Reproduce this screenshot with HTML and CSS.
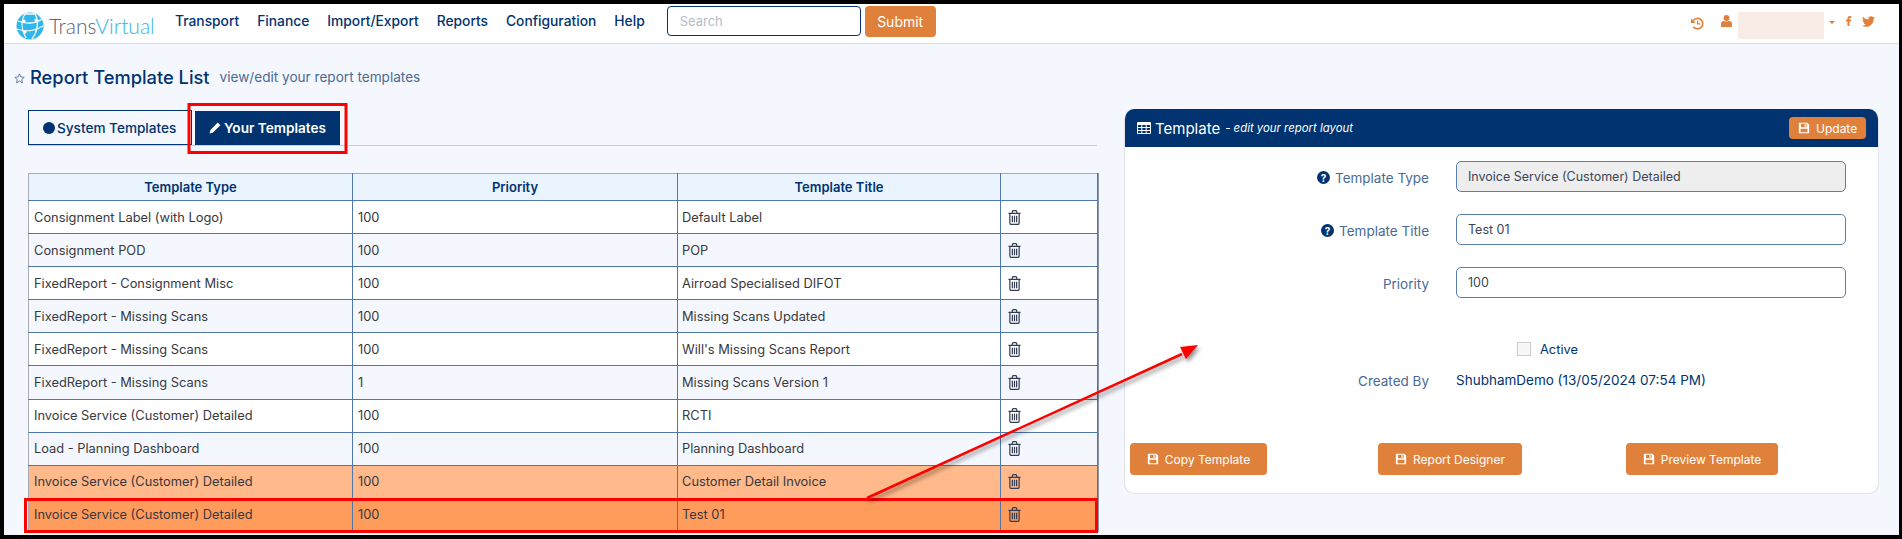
FILE: index.html
```html
<!DOCTYPE html>
<html lang="en">
<head>
<meta charset="utf-8">
<title>Report Template List</title>
<link rel="stylesheet" href="styles.css">
</head>
<body>
<svg class="defs" aria-hidden="true">
  <symbol id="i-save" viewBox="0 0 14 14"><path fill-rule="evenodd" d="M1.500 1h9.500l2 2v9.500a.5.5 0 0 1-.5.5h-11a.5.5 0 0 1-.5-.5v-11a.5.5 0 0 1 .5-.5zM3.500 2v4h6.500V2zM3 8v4h8V8zM7.600 2.600h1.400v2.800H7.600z"/></symbol>
  <symbol id="i-trash" viewBox="0 0 14 16"><path fill="none" stroke="currentColor" stroke-width="1.300" d="M.5 3.500h13M2 3.500v10.200c0 1 .6 1.800 1.400 1.800h7.200c.8 0 1.400-.8 1.400-1.800V3.500M4.600 3.500V2c0-.8.5-1.400 1.200-1.400h2.400c.7 0 1.200.6 1.200 1.400v1.500M4.700 6v7M7 6v7M9.300 6v7"/></symbol>
</svg>
<div class="frame">
  <header class="topbar">
    <a class="logo">
      <svg class="globe" viewBox="0 0 28 28"><circle cx="14" cy="14" r="13.500" fill="#2fb6ea"/><path fill="none" stroke="#fff" stroke-width="1.300" d="M9 2c-4 6-4 15 1 24M2 9c7 3 17 3 24-2M1 17c8 3 18 2 26-3M19 2c4 7 3 17-3 25M9 2c4 0 8 0 10 0"/><circle cx="8" cy="9" r="1.600" fill="#fff"/><circle cx="20" cy="8" r="1.600" fill="#fff"/><circle cx="9" cy="20" r="1.600" fill="#fff"/></svg>
      <span class="logo-text">Trans<span class="logo-accent">Virtual</span></span>
    </a>
    <nav class="nav">
      <a>Transport</a><a>Finance</a><a>Import/Export</a><a>Reports</a><a>Configuration</a><a>Help</a>
    </nav>
    <form class="search">
      <input class="search-input" type="text" placeholder="Search">
      <button class="btn btn-submit" type="button">Submit</button>
    </form>
    <div class="top-right">
      <svg class="ti ti-history" viewBox="0 0 14 14"><path fill="none" stroke="currentColor" stroke-width="1.800" d="M2.400 4A5.600 5.600 0 1 1 2.600 10.500"/><path d="M0 1.500v5h5z" fill="currentColor"/><path fill="none" stroke="currentColor" stroke-width="1.400" d="M7 3.800v3.600h3"/></svg>
      <svg class="ti ti-user" viewBox="0 0 12 13"><circle cx="6" cy="3.200" r="3.200" fill="currentColor"/><path fill="currentColor" d="M0 13V9.500C0 7.600 1.400 6.400 3 6.400c1 .7 5 .7 6 0 1.600 0 3 1.200 3 3.100V13z"/></svg>
      <span class="blurred"></span>
      <span class="caret"></span>
      <svg class="ti ti-fb" viewBox="5 3 14 22"><path fill="currentColor" d="M14.500 8h3V4h-3c-2.800 0-4.500 1.900-4.500 4.700V11H7v4h3v9h4v-9h3l.5-4H14V8.900c0-.6.200-.9.500-.9z"/></svg>
      <svg class="ti ti-tw" viewBox="0 0 24 24"><path fill="currentColor" d="M23.953 4.570a10 10 0 01-2.825.775 4.958 4.958 0 002.163-2.723c-.951.555-2.005.959-3.127 1.184a4.920 4.920 0 00-8.384 4.482C7.690 8.095 4.067 6.130 1.640 3.162a4.822 4.822 0 00-.666 2.475c0 1.710.870 3.213 2.188 4.096a4.904 4.904 0 01-2.228-.616v.060a4.923 4.923 0 003.946 4.827 4.996 4.996 0 01-2.212.085 4.936 4.936 0 004.604 3.417 9.867 9.867 0 01-6.102 2.105c-.390 0-.779-.023-1.170-.067a13.995 13.995 0 007.557 2.209c9.053 0 13.998-7.496 13.998-13.985 0-.210 0-.420-.015-.630A9.935 9.935 0 0024 4.590z"/></svg>
    </div>
  </header>

  <main class="content">
    <div class="page-title">
      <svg class="star" viewBox="0 0 12 12"><path fill="none" stroke="#4a6a94" stroke-width=".9" d="M6 1l1.500 3.300 3.600.4-2.700 2.400.8 3.600L6 8.900l-3.200 1.800.8-3.600L.9 4.700l3.600-.4z"/></svg>
      <h1>Report Template List</h1>
      <span class="page-sub">view/edit your report templates</span>
    </div>

    <div class="columns">
      <section class="left">
        <div class="tabs">
          <a class="tab">
            <span class="dot"></span>System Templates
          </a>
          <a class="tab tab-active">
            <svg class="tab-ico" viewBox="0 0 12 12"><path fill="#fff" d="M8.800.6l2.600 2.600-7.400 7.400-3.400.8.800-3.400z"/></svg>Your Templates
          </a>
        </div>
        <table class="grid">
          <colgroup><col class="c1"><col class="c2"><col class="c3"><col class="c4"></colgroup>
          <thead>
            <tr><th>Template Type</th><th>Priority</th><th>Template Title</th><th></th></tr>
          </thead>
          <tbody>
            <tr><td>Consignment Label (with Logo)</td><td>100</td><td>Default Label</td><td><svg class="trash"><use href="#i-trash"/></svg></td></tr>
            <tr><td>Consignment POD</td><td>100</td><td>POP</td><td><svg class="trash"><use href="#i-trash"/></svg></td></tr>
            <tr><td>FixedReport - Consignment Misc</td><td>100</td><td>Airroad Specialised DIFOT</td><td><svg class="trash"><use href="#i-trash"/></svg></td></tr>
            <tr><td>FixedReport - Missing Scans</td><td>100</td><td>Missing Scans Updated</td><td><svg class="trash"><use href="#i-trash"/></svg></td></tr>
            <tr><td>FixedReport - Missing Scans</td><td>100</td><td>Will's Missing Scans Report</td><td><svg class="trash"><use href="#i-trash"/></svg></td></tr>
            <tr><td>FixedReport - Missing Scans</td><td>1</td><td>Missing Scans Version 1</td><td><svg class="trash"><use href="#i-trash"/></svg></td></tr>
            <tr><td>Invoice Service (Customer) Detailed</td><td>100</td><td>RCTI</td><td><svg class="trash"><use href="#i-trash"/></svg></td></tr>
            <tr><td>Load - Planning Dashboard</td><td>100</td><td>Planning Dashboard</td><td><svg class="trash"><use href="#i-trash"/></svg></td></tr>
            <tr class="hl"><td>Invoice Service (Customer) Detailed</td><td>100</td><td>Customer Detail Invoice</td><td><svg class="trash"><use href="#i-trash"/></svg></td></tr>
            <tr class="sel"><td>Invoice Service (Customer) Detailed</td><td>100</td><td>Test 01</td><td><svg class="trash"><use href="#i-trash"/></svg></td></tr>
          </tbody>
        </table>
      </section>

      <section class="panel">
        <div class="panel-head">
          <div class="panel-title">
            <svg class="tbl-ico" viewBox="0 0 14 12"><path fill="#fff" fill-rule="evenodd" d="M1 0h12a1 1 0 0 1 1 1v10a1 1 0 0 1-1 1H1a1 1 0 0 1-1-1V1a1 1 0 0 1 1-1zM1 3v2h3.300V3zM5.300 3v2h3.400V3zM9.700 3v2H13V3zM1 6v2h3.300V6zM5.300 6v2h3.400V6zM9.700 6v2H13V6zM1 9v2h3.300V9zM5.300 9v2h3.400V9zM9.700 9v2H13V9z"/></svg>
            <span>Template</span><em>- edit your report layout</em>
          </div>
          <button class="btn btn-update" type="button"><svg class="save"><use href="#i-save"/></svg>Update</button>
        </div>
        <div class="panel-body">
          <div class="form-row">
            <label class="form-label"><span class="help">?</span>Template Type</label>
            <input class="form-input" type="text" value="Invoice Service (Customer) Detailed" disabled>
          </div>
          <div class="form-row">
            <label class="form-label"><span class="help">?</span>Template Title</label>
            <input class="form-input" type="text" value="Test 01">
          </div>
          <div class="form-row">
            <label class="form-label">Priority</label>
            <input class="form-input" type="text" value="100">
          </div>
          <div class="active-row"><span class="check"></span>Active</div>
          <div class="created-row">
            <span class="form-label">Created By</span>
            <span class="created-value">ShubhamDemo (13/05/2024 07:54 PM)</span>
          </div>
          <div class="actions">
            <button class="btn btn-action" type="button"><svg class="save"><use href="#i-save"/></svg>Copy Template</button>
            <button class="btn btn-action" type="button"><svg class="save"><use href="#i-save"/></svg>Report Designer</button>
            <button class="btn btn-action" type="button"><svg class="save"><use href="#i-save"/></svg>Preview Template</button>
          </div>
        </div>
      </section>
    </div>
  </main>

  <svg class="marks" viewBox="0 0 1902 539" aria-hidden="true">
    <defs><filter id="sh" x="-10%" y="-10%" width="120%" height="120%"><feDropShadow dx="2" dy="3" stdDeviation="2" flood-color="#000" flood-opacity=".45"/></filter></defs>
    <rect class="mark-box" x="189" y="104.500" width="157" height="48"/>
    <rect class="mark-box" x="25.500" y="499.500" width="1071" height="32"/>
    <g filter="url(#sh)">
      <path class="mark-line" d="M867 498L1182 354"/>
      <path class="mark-head" d="M1198 345L1180 347L1186 359z"/>
    </g>
  </svg>
</div>
</body>
</html>
```

FILE: styles.css
```css
* { box-sizing: border-box; }
html, body { margin: 0; padding: 0; height: 100%; overflow: hidden; }
body { font-family: "Inter", "Liberation Sans", sans-serif; font-size: 12.850px; color: #333; background: #f4f8fe; }
.defs { position: absolute; width: 0; height: 0; }

.frame { position: relative; width: 1902px; height: 539px; border: solid #000; border-width: 4px 3px 4px 4px; background: #f4f8fe; overflow: hidden; }

.topbar { display: flex; align-items: flex-start; height: 40px; background: #fff; border-bottom: 1px solid #d9dde5; padding-left: 12px; }
.logo { display: flex; align-items: center; width: 159px; height: 39px; }
.globe { width: 28px; height: 28px; margin-right: 5px; flex: none; margin-top: 4px; }
.logo-text { font-family: "Lato", sans-serif; font-weight: 300; font-size: 21px; color: #5b6670; margin-top: 3px; }
.logo-accent { color: #2fb6ea; }
.nav { display: flex; gap: 18px; height: 39px; align-items: center; font-size: 13.800px; font-weight: 500; color: #00336f; margin-top: -3px; }
.search { display: flex; gap: 4px; margin-left: 22px; margin-top: 2px; }
.search-input { width: 194px; height: 30px; border: 1px solid #00336f; border-radius: 4px; padding: 0 12px; font: 13px "Inter", sans-serif; background: #fff; }
.search-input::placeholder { color: #b5bccb; }
.btn { display: inline-flex; align-items: center; border: 0; border-radius: 4px; background: #e0813b; color: #fff; font: 13px "Inter", sans-serif; }
.btn-submit { width: 71px; height: 31px; justify-content: center; font-size: 14px; }

.top-right { display: flex; align-items: flex-start; margin-left: auto; color: #e0813b; padding-right: 24px; height: 39px; }
.ti { display: block; flex: none; }
.ti-history { width: 13px; height: 13px; margin-top: 13px; }
.ti-user { width: 11px; height: 12px; margin: 11px 6px 0 17px; }
.blurred { width: 86px; height: 27px; margin-top: 8px; background: #f9ece7; }
.caret { width: 0; height: 0; border: solid transparent; border-width: 3px 3px 0; border-top-color: #e0813b; margin: 17px 10px 0 5px; }
.ti-fb { width: 7px; height: 12px; margin-top: 11px; }
.ti-tw { width: 13px; height: 13px; margin: 11px 0 0 10px; }

.content { padding-left: 10px; }
.page-title { display: flex; align-items: center; height: 24px; margin-top: 21px; }
.star { width: 11px; height: 11px; margin: 2px 5px 0 0; }
.page-title h1 { margin: 0; font-size: 18.300px; line-height: 24px; font-weight: 500; color: #00336f; }
.page-sub { margin-left: 10px; font-size: 13.600px; color: #4a6a94; }

.columns { display: flex; align-items: flex-start; margin-top: 21px; }
.left { width: 1069px; margin-left: 14px; }
.tabs { display: flex; height: 36px; border-bottom: 1px solid #c7d0df; gap: 3px; }
.tab { display: flex; align-items: center; height: 35px; font-size: 13.600px; font-weight: 500; color: #00336f; }
.tab:first-child { width: 164px; padding-left: 14px; border: 1px solid #00336f; }
.tab-active { width: 145px; margin-top: 1px; height: 34px; padding-left: 14px; background: #00336f; color: #fff; font-weight: 600; }
.dot { width: 12px; height: 12px; border-radius: 50%; background: #00336f; margin-right: 2px; }
.tab-ico { width: 12px; height: 12px; margin-right: 3px; }

.grid { border-collapse: collapse; table-layout: fixed; width: 1069px; margin-top: 27px; box-shadow: 1px 0 0 #8a97ab; }
.c1 { width: 324px; } .c2 { width: 325px; } .c3 { width: 323px; } .c4 { width: 97px; }
.grid th, .grid td { border: 1px solid #4f77a8; padding: 0 5px; }
.grid td:nth-child(3) { padding-left: 4px; }
.grid th { height: 27px; background: #eaf4ff; color: #00336f; font-size: 13px; font-weight: 600; text-align: center; border-top-color: #a9acb2; }
.grid th:first-child, .grid td:first-child { border-left-color: #a9acb2; }
.grid td { height: 33.100px; background: #fff; color: #38383d; }
.grid tbody tr:nth-child(even) td { background: #f4f8fe; }
.grid tbody tr.hl td { background: #ffb98a; }
.grid tbody tr.sel td { background: #ff9c5c; }
.trash { display: block; width: 13px; height: 15px; margin-left: 2px; color: #333c50; }

.panel { width: 755px; margin: -1px 0 0 27px; background: #fff; border: 1px solid #dfe3ea; border-top: 0; border-radius: 10px; overflow: hidden; }
.panel-head { display: flex; align-items: center; justify-content: space-between; height: 38px; padding: 0 12px 0 12px; background: #00336f; color: #fff; }
.panel-title { display: flex; align-items: center; font-size: 15px; }
.tbl-ico { width: 14px; height: 12px; margin-right: 4px; }
.panel-title em { font-size: 11.400px; margin-left: 5px; }
.btn-update { width: 77px; height: 22px; padding-left: 9px; font-size: 12px; }
.save { width: 12px; height: 12px; margin-right: 6px; fill: #fff; }

.panel-body { padding: 14px 0 18px; }
.form-row { display: flex; align-items: center; height: 31px; margin-bottom: 22px; }
.form-label { display: flex; align-items: center; justify-content: flex-end; flex: none; width: 304px; margin-right: 27px; padding-top: 2px; color: #4a6a94; font-size: 13.500px; }
.help { display: inline-flex; align-items: center; justify-content: center; width: 13px; height: 13px; margin-right: 5px; border-radius: 50%; background: #00336f; color: #fff; font-size: 10px; font-weight: 700; }
.form-input { width: 390px; height: 31px; padding: 0 11px; border: 1px solid #5a7fae; border-radius: 5px; background: #fff; color: #3a4658; font: 12.500px "Inter", sans-serif; }
.form-input:disabled { background: #eee; }

.active-row { display: flex; align-items: center; height: 14px; margin-top: 44px; padding-left: 392px; color: #00336f; font-size: 12.850px; }
.check { width: 14px; height: 14px; margin-right: 9px; border: 1px solid #ccc; background: #f7f7f7; }
.created-row { display: flex; align-items: center; height: 20px; margin-top: 14px; }
.created-value { color: #00336f; font-size: 13.500px; }
.actions { display: grid; grid-template-columns: repeat(3, 248px); justify-items: start; padding-left: 5px; margin-top: 53px; }
.btn-action { height: 32px; justify-content: center; font-size: 12px; }
.btn-action:nth-child(1) { width: 137px; }
.btn-action:nth-child(2) { width: 144px; }
.btn-action:nth-child(3) { width: 152px; }

.marks { position: absolute; left: -4px; top: -4px; width: 1902px; height: 539px; pointer-events: none; }
.mark-box { fill: none; stroke: #f00; stroke-width: 3; }
.mark-line { fill: none; stroke: #f00; stroke-width: 2.500; }
.mark-head { fill: #f00; }
```
